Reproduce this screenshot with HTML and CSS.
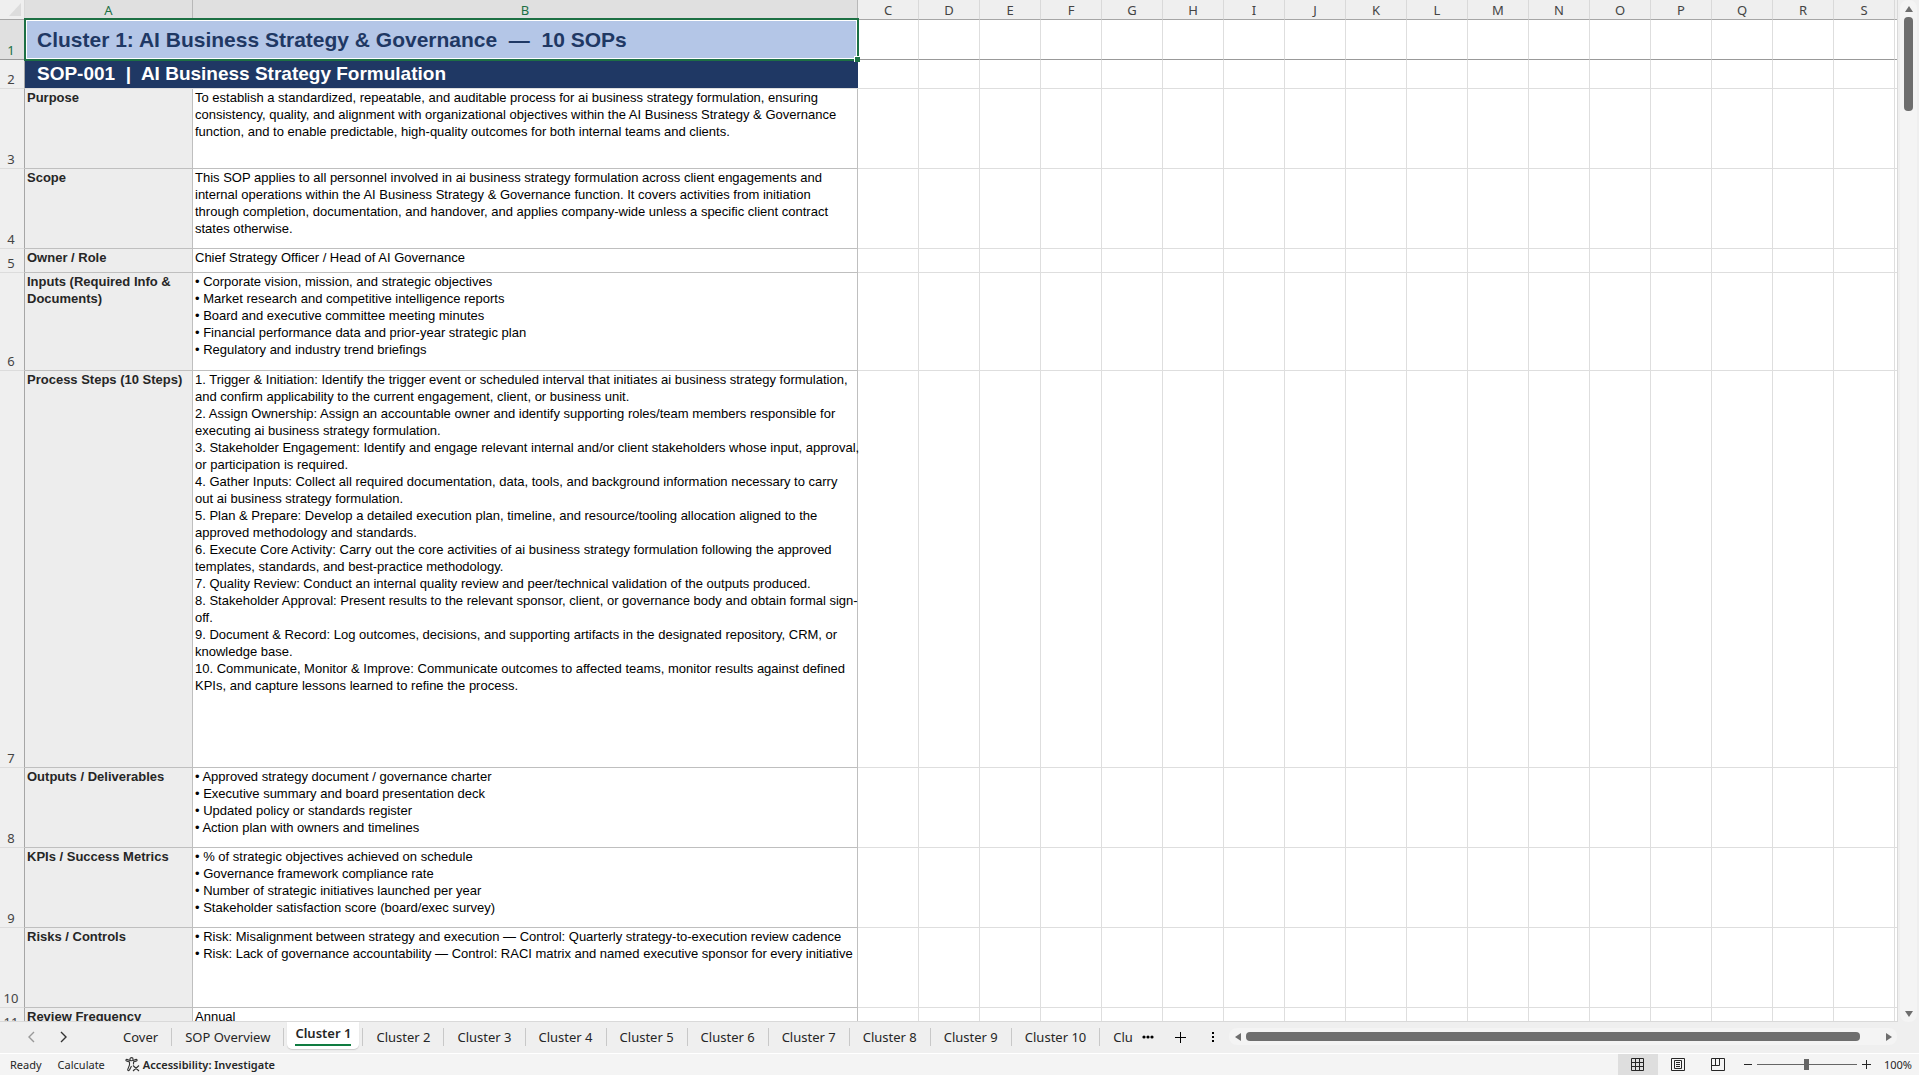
FILE: index.html
```html
<!DOCTYPE html>
<html lang="en">
<head>
    <meta charset="UTF-8">
    <meta name="viewport" content="width=device-width, initial-scale=1.0">
    <title>SOP Workbook - Cluster 1</title>
    <link rel="stylesheet" href="styles.css">
</head>
<body>
    <!-- Worksheet -->
    <main class="workspace">
        <div class="sheet">
            <table class="grid">
                <colgroup id="cols">
                    <col class="col-num">
                    <col class="col-a">
                    <col class="col-b">
                </colgroup>
                <thead>
                    <tr id="letters">
                        <th class="corner"><svg width="12" height="13" viewBox="0 0 12 13"><path d="M12 0v13H0z" fill="#dcdcdc"/></svg></th>
                        <th class="selected">A</th>
                        <th class="selected">B</th>
                    </tr>
                </thead>
                <tbody id="rows">
                    <tr class="row-title">
                        <th class="selected">1</th>
                        <td colspan="2" class="title">Cluster 1: AI Business Strategy &amp; Governance&nbsp; —&nbsp; 10 SOPs<span class="handle"></span></td>
                    </tr>
                    <tr class="row-sop">
                        <th>2</th>
                        <td colspan="2" class="sop">SOP-001&nbsp; |&nbsp; AI Business Strategy Formulation</td>
                    </tr>
                    <tr class="row-medium">
                        <th>3</th>
                        <td class="label">Purpose</td>
                        <td class="text">To establish a standardized, repeatable, and auditable process for ai business strategy formulation, ensuring<br>consistency, quality, and alignment with organizational objectives within the AI Business Strategy &amp; Governance<br>function, and to enable predictable, high-quality outcomes for both internal teams and clients.</td>
                    </tr>
                    <tr class="row-medium">
                        <th>4</th>
                        <td class="label">Scope</td>
                        <td class="text">This SOP applies to all personnel involved in ai business strategy formulation across client engagements and<br>internal operations within the AI Business Strategy &amp; Governance function. It covers activities from initiation<br>through completion, documentation, and handover, and applies company-wide unless a specific client contract<br>states otherwise.</td>
                    </tr>
                    <tr class="row-small">
                        <th>5</th>
                        <td class="label">Owner / Role</td>
                        <td class="text">Chief Strategy Officer / Head of AI Governance</td>
                    </tr>
                    <tr class="row-inputs">
                        <th>6</th>
                        <td class="label">Inputs (Required Info &amp;<br>Documents)</td>
                        <td class="text">• Corporate vision, mission, and strategic objectives<br>• Market research and competitive intelligence reports<br>• Board and executive committee meeting minutes<br>• Financial performance data and prior-year strategic plan<br>• Regulatory and industry trend briefings</td>
                    </tr>
                    <tr class="row-steps">
                        <th>7</th>
                        <td class="label">Process Steps (10 Steps)</td>
                        <td class="text">1. Trigger &amp; Initiation: Identify the trigger event or scheduled interval that initiates ai business strategy formulation,<br>and confirm applicability to the current engagement, client, or business unit.<br>2. Assign Ownership: Assign an accountable owner and identify supporting roles/team members responsible for<br>executing ai business strategy formulation.<br>3. Stakeholder Engagement: Identify and engage relevant internal and/or client stakeholders whose input, approval,<br>or participation is required.<br>4. Gather Inputs: Collect all required documentation, data, tools, and background information necessary to carry<br>out ai business strategy formulation.<br>5. Plan &amp; Prepare: Develop a detailed execution plan, timeline, and resource/tooling allocation aligned to the<br>approved methodology and standards.<br>6. Execute Core Activity: Carry out the core activities of ai business strategy formulation following the approved<br>templates, standards, and best-practice methodology.<br>7. Quality Review: Conduct an internal quality review and peer/technical validation of the outputs produced.<br>8. Stakeholder Approval: Present results to the relevant sponsor, client, or governance body and obtain formal sign-<br>off.<br>9. Document &amp; Record: Log outcomes, decisions, and supporting artifacts in the designated repository, CRM, or<br>knowledge base.<br>10. Communicate, Monitor &amp; Improve: Communicate outcomes to affected teams, monitor results against defined<br>KPIs, and capture lessons learned to refine the process.</td>
                    </tr>
                    <tr class="row-medium">
                        <th>8</th>
                        <td class="label">Outputs / Deliverables</td>
                        <td class="text">• Approved strategy document / governance charter<br>• Executive summary and board presentation deck<br>• Updated policy or standards register<br>• Action plan with owners and timelines</td>
                    </tr>
                    <tr class="row-medium">
                        <th>9</th>
                        <td class="label">KPIs / Success Metrics</td>
                        <td class="text">• % of strategic objectives achieved on schedule<br>• Governance framework compliance rate<br>• Number of strategic initiatives launched per year<br>• Stakeholder satisfaction score (board/exec survey)</td>
                    </tr>
                    <tr class="row-medium">
                        <th>10</th>
                        <td class="label">Risks / Controls</td>
                        <td class="text">• Risk: Misalignment between strategy and execution — Control: Quarterly strategy-to-execution review cadence<br>• Risk: Lack of governance accountability — Control: RACI matrix and named executive sponsor for every initiative</td>
                    </tr>
                    <tr class="row-small">
                        <th>11</th>
                        <td class="label">Review Frequency</td>
                        <td class="text">Annual</td>
                    </tr>
                </tbody>
            </table>
        </div>
        <div class="scroll-v">
            <button aria-label="Scroll up"><svg width="10" height="8" viewBox="0 0 10 8"><path d="M5 1l4 6H1z"/></svg></button>
            <div class="thumb"></div>
            <button class="down" aria-label="Scroll down"><svg width="10" height="8" viewBox="0 0 10 8"><path d="M5 7l4-6H1z"/></svg></button>
        </div>
    </main>

    <!-- Sheet tabs -->
    <nav class="tab-bar">
        <div class="tab-nav">
            <button class="muted" aria-label="Previous sheets"><svg width="8" height="12" viewBox="0 0 8 12"><path d="M7 1L2 6l5 5"/></svg></button>
            <button aria-label="Next sheets"><svg width="8" height="12" viewBox="0 0 8 12"><path d="M1 1l5 5-5 5"/></svg></button>
        </div>
        <div class="tabs">
            <button class="tab">Cover</button>
            <button class="tab">SOP Overview</button>
            <button class="tab active"><span>Cluster 1</span></button>
            <button class="tab">Cluster 2</button>
            <button class="tab">Cluster 3</button>
            <button class="tab">Cluster 4</button>
            <button class="tab">Cluster 5</button>
            <button class="tab">Cluster 6</button>
            <button class="tab">Cluster 7</button>
            <button class="tab">Cluster 8</button>
            <button class="tab">Cluster 9</button>
            <button class="tab">Cluster 10</button>
            <button class="tab">Cluster 11</button>
        </div>
        <div class="tab-tools">
            <button aria-label="More sheets"><svg width="12" height="4" viewBox="0 0 12 4"><circle cx="2" cy="2" r="1.6"/><circle cx="6" cy="2" r="1.6"/><circle cx="10" cy="2" r="1.6"/></svg></button>
            <button aria-label="New sheet"><svg width="11" height="11" viewBox="0 0 11 11"><path d="M5 0h1v5h5v1H6v5H5V6H0V5h5z"/></svg></button>
            <button class="grip" aria-label="Resize tabs"><svg width="2" height="10" viewBox="0 0 2 10"><path d="M0 0h2v2H0zM0 4h2v2H0zM0 8h2v2H0z"/></svg></button>
        </div>
        <div class="scroll-h">
            <button aria-label="Scroll left"><svg width="8" height="10" viewBox="0 0 8 10"><path d="M1 5l6-4v8z"/></svg></button>
            <div class="thumb"></div>
            <button aria-label="Scroll right"><svg width="8" height="10" viewBox="0 0 8 10"><path d="M7 5L1 1v8z"/></svg></button>
        </div>
    </nav>

    <!-- Status bar -->
    <footer class="status-bar">
        <span class="ready">Ready</span>
        <button>Calculate</button>
        <button class="accessibility">
            <svg width="15" height="15" viewBox="0 0 15 15" fill="none" stroke="#333" stroke-width="1.1"><circle cx="6.500" cy="2.200" r="1.600"/><path d="M5 3.500L1.800 2.400Q.8 2.300.9 3.200q0 .5.600.700L4.500 5v3L2.700 12.500q0 1.200 1 1.100.5 0 .8-.7L6.500 9M8 3.500l3.200-1.100q1-.1.900.8 0 .5-.6.700L8.500 5v2.500M8 8.500l6 5.500M14 8.500L8 14"/></svg>
            Accessibility: Investigate
        </button>
        <div class="views">
            <button class="on" aria-label="Normal"><svg width="13" height="13" viewBox="0 0 13 13"><path d="M.5.5h12v12H.5zM4.500.5v12M8.500.5v12M.5 4.500h12M.5 8.500h12"/></svg></button>
            <button aria-label="Page layout"><svg width="14" height="13" viewBox="0 0 14 13"><path d="M.5.5h13v12H.5zM3.500 2.500h7v8h-7zM5 4.500h4M5 6.500h4M5 8.500h4"/></svg></button>
            <button aria-label="Page break preview"><svg width="14" height="13" viewBox="0 0 14 13"><path d="M.5.5h13v12H.5zM.5 7.500h8V.5M4.500.5v7"/></svg></button>
        </div>
        <div class="zoom">
            <button aria-label="Zoom out"><svg width="8" height="9" viewBox="0 0 8 9"><path d="M0 4.500h8"/></svg></button>
            <input type="range" min="0" max="200" value="100" aria-label="Zoom">
            <button aria-label="Zoom in"><svg width="9" height="9" viewBox="0 0 9 9"><path d="M0 4.500h9M4.500 0v9"/></svg></button>
            <button class="percent">100%</button>
        </div>
    </footer>

    <script>
        // Add the empty columns C to S, plus the sliver of the next one
        const letters = 'CDEFGHIJKLMNOPQRS'.split('').concat('');

        letters.forEach(letter => {
            const col = document.createElement('col');
            if (letter) col.className = 'col-std';
            document.getElementById('cols').appendChild(col);

            const th = document.createElement('th');
            th.textContent = letter;
            document.getElementById('letters').appendChild(th);

            document.querySelectorAll('#rows tr').forEach(row => row.insertCell());
        });
    </script>
</body>
</html>
```
FILE: styles.css
```css
* {
    margin: 0;
    padding: 0;
    box-sizing: border-box;
}

body {
    display: flex;
    flex-direction: column;
    height: 100vh;
    overflow: hidden;
    background: #efefef;
    color: #262626;
    font-family: "Noto Sans", sans-serif;
    font-size: 13px;
}

button {
    display: flex;
    align-items: center;
    justify-content: center;
    border: none;
    background: none;
    color: inherit;
    font: inherit;
    white-space: nowrap;
}

svg {
    display: block;
    flex-shrink: 0;
}

/* Worksheet */
.workspace {
    display: flex;
    flex: 1;
    min-height: 0;
}

.sheet {
    flex: 1;
    min-width: 0;
    overflow: hidden;
    background: #fff;
    border-right: 1px solid #d9d9d9;
    border-bottom: 1px solid #d9d9d9;
}

.grid {
    width: 100%;
    table-layout: fixed;
    border-collapse: separate;
    border-spacing: 0;
}

.col-num {
    width: 25px;
}

.col-a {
    width: 168px;
}

.col-b {
    width: 665px;
}

.col-std {
    width: 61px;
}

.grid th {
    background: #efefef;
    color: #444;
    font-weight: normal;
    line-height: 17px;
}

.grid thead th {
    height: 20px;
    padding-top: 2px;
    border-right: 1px solid #d9d9d9;
    border-bottom: 1px solid #a6a6a6;
}

.grid thead .corner {
    padding: 0 0 0 9px;
}

.grid tbody th {
    padding-right: 2px;
    vertical-align: bottom;
    border-right: 1px solid #a6a6a6;
    border-bottom: 1px solid #dcdcdc;
}

.grid th.selected {
    background: #e0e0e0;
    color: #1d7044;
}

.grid thead .selected {
    border-right-color: #b8b8b8;
}

.grid td {
    border-right: 1px solid #dedede;
    border-bottom: 1px solid #dedede;
    vertical-align: top;
    white-space: nowrap;
}

.grid td:last-child,
.grid th:last-child {
    border-right: none;
}

.row-title {
    height: 40px;
}

.row-sop {
    height: 29px;
}

.row-small {
    height: 24px;
}

.row-medium {
    height: 80px;
}

.row-inputs {
    height: 98px;
}

.row-steps {
    height: 397px;
}

.grid .row-title td,
.grid .row-title th {
    border-bottom-color: #999;
}

.grid .title,
.grid .sop {
    padding-left: 12px;
    vertical-align: middle;
    font-family: "Liberation Sans", Arial, sans-serif;
    font-weight: bold;
}

.grid .title {
    position: relative;
    background: #b4c6e7;
    border-right: none;
    color: #1f3864;
    font-size: 21px;
    line-height: 24px;
}

/* Selection outline around the active cell */
.title::after {
    content: "";
    position: absolute;
    inset: -2px -1px -2px -1px;
    border: 2px solid #1d7044;
    box-shadow: inset 0 0 0 1px #fff;
}

.handle {
    position: absolute;
    right: -2px;
    bottom: -3px;
    z-index: 1;
    width: 6px;
    height: 6px;
    background: #1d7044;
    border-top: 1px solid #fff;
    border-left: 1px solid #fff;
}

.grid .sop {
    background: #1f3864;
    border-right: none;
    color: #fff;
    font-size: 19px;
    line-height: 22px;
}

.grid .label,
.grid .text {
    border-color: #bfbfbf;
    font-family: "Liberation Sans", Arial, sans-serif;
    font-size: 13px;
    line-height: 17px;
}

.grid .label {
    padding-left: 2px;
    background: #ededed;
    font-weight: bold;
}

.grid .text {
    padding-left: 2px;
    color: #000;
}

/* Scroll bars */
.scroll-v {
    display: flex;
    flex-direction: column;
    align-items: center;
    width: 17px;
    margin: 0 2px;
    border-radius: 8px;
    background: #f4f4f4;
    fill: #6e6e6e;
}

.scroll-v button {
    width: 17px;
    height: 17px;
}

.scroll-v .down {
    margin-top: auto;
}

.scroll-v .thumb {
    width: 9px;
    height: 94px;
    border-radius: 4px;
    background: #6e6e6e;
}

.scroll-h {
    display: flex;
    align-items: center;
    flex: 1;
    height: 17px;
    margin: 6px 22px 0 0;
    border-radius: 8px;
    background: #f4f4f4;
    fill: #6e6e6e;
}

.scroll-h button {
    width: 17px;
    height: 17px;
}

.scroll-h .thumb {
    flex: 1;
    height: 9px;
    margin-right: 20px;
    border-radius: 4px;
    background: #6e6e6e;
}

/* Sheet tabs */
.tab-bar {
    display: flex;
    height: 32px;
    border-bottom: 1px solid #fff;
}

.tab-nav {
    display: flex;
    width: 110px;
    padding-left: 14px;
}

.tab-nav button {
    width: 33px;
    height: 29px;
}

.tab-nav path {
    fill: none;
    stroke: #333;
    stroke-width: 1.4;
}

.tab-nav .muted path {
    stroke: #999;
}

.tabs {
    display: flex;
    width: 1023px;
    overflow: hidden;
}

.tab {
    position: relative;
    flex-shrink: 0;
    height: 30px;
    padding: 0 14px 0 13px;
}

.tab::after {
    content: "";
    position: absolute;
    top: 6px;
    right: 0;
    width: 1px;
    height: 18px;
    background: #c8c8c8;
}

.tab.active {
    align-items: flex-start;
    height: 27px;
    margin: 0 4px 0 3px;
    padding: 2px 8px 0;
    border-radius: 0 0 5px 5px;
    background: #fff;
    box-shadow: 0 1px 1px #ccc;
    font-weight: 600;
}

.tab.active span {
    padding-bottom: 1px;
    line-height: 19px;
    border-bottom: 2px solid #107c41;
}

.tab.active::after {
    right: -4px;
}

.tab-tools {
    display: flex;
    align-items: center;
    gap: 21px;
    height: 30px;
    padding: 0 15px 0 9px;
}

.grip {
    margin-left: 5px;
}

/* Status bar */
.status-bar {
    display: flex;
    align-items: center;
    height: 21px;
    padding-left: 10px;
    background: #f4f4f4;
    font-size: 11px;
}

.ready {
    margin-right: 16px;
}

.accessibility {
    gap: 3px;
    margin-left: 20px;
    font-weight: 600;
}

.views {
    display: flex;
    margin-left: auto;
}

.views button {
    width: 40px;
    height: 21px;
}

.views .on {
    background: #dedede;
}

.views path,
.zoom path {
    fill: none;
    stroke: #262626;
}

.zoom {
    display: flex;
    align-items: center;
    padding: 0 7px 0 6px;
    gap: 5px;
}

.zoom button {
    height: 21px;
}

.zoom input {
    width: 100px;
    height: 11px;
    appearance: none;
    background: linear-gradient(#666, #666) center / 100% 1px no-repeat;
}

.zoom input::-webkit-slider-thumb {
    appearance: none;
    width: 5px;
    height: 11px;
    background: #666;
}

.percent {
    margin-left: 8px;
}
```
